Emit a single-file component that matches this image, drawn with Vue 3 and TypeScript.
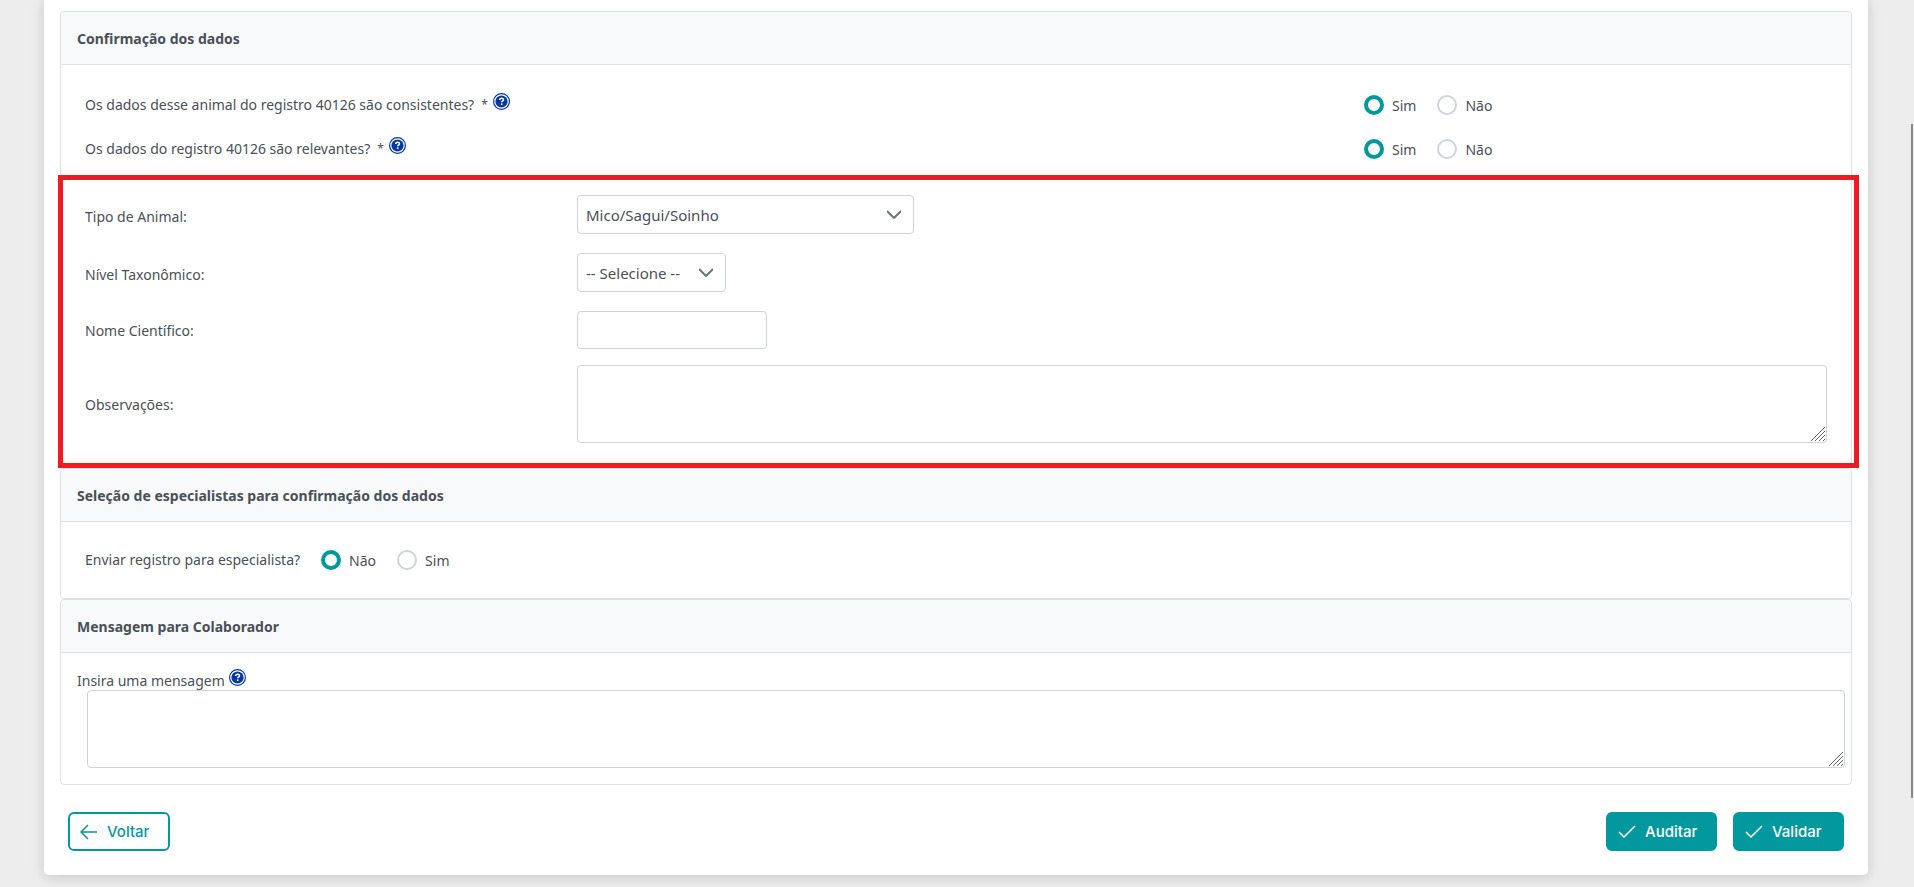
<script setup lang="ts">
import { ref } from 'vue'

interface Question {
  id: string
  text: string
}

const questions: Question[] = [
  { id: 'consistentes', text: 'Os dados desse animal do registro 40126 são consistentes?' },
  { id: 'relevantes', text: 'Os dados do registro 40126 são relevantes?' },
]
const answers = ref<Record<string, string>>({ consistentes: 'Sim', relevantes: 'Sim' })
const animal = ref('Mico/Sagui/Soinho')
const level = ref('')
const scientificName = ref('')
const notes = ref('')
const specialist = ref('Não')
const message = ref('')
</script>

<template>
  <main class="page">
    <form class="card" @submit.prevent>
      <section class="panel">
        <h2 class="panel-title">Confirmação dos dados</h2>
        <div class="questions">
          <div v-for="q in questions" :key="q.id" class="question" role="radiogroup" :aria-labelledby="q.id">
            <div class="question-text">
              <span :id="q.id">{{ q.text }}</span>
              <span class="star">*</span>
              <button type="button" class="help" aria-label="Ajuda">
                <svg viewBox="0 0 17 17" aria-hidden="true">
                  <circle cx="8.5" cy="8.5" r="7.900" fill="#fff" stroke="#06399b" stroke-width="1.200" />
                  <circle cx="8.5" cy="8.5" r="6.100" fill="#06399b" />
                  <path d="M6.700 7.100c0-2.500 3.800-2.300 3.800-.3 0 1.300-1.800 1.300-1.800 2.500" fill="none" stroke="#fff" stroke-width="1.500" />
                  <circle cx="8.700" cy="11.200" r=".9" fill="#fff" />
                </svg>
              </button>
            </div>
            <div class="options">
              <label v-for="o in ['Sim', 'Não']" :key="o" class="option">
                <input v-model="answers[q.id]" type="radio" :name="q.id" :value="o" />
                <span>{{ o }}</span>
              </label>
            </div>
          </div>
        </div>
        <div class="fields">
          <div class="field choice">
            <label for="animal">Tipo de Animal:</label>
            <select id="animal" v-model="animal" class="control wide">
              <option>Mico/Sagui/Soinho</option>
            </select>
          </div>
          <div class="field choice">
            <label for="level">Nível Taxonômico:</label>
            <select id="level" v-model="level" class="control narrow">
              <option value="">-- Selecione --</option>
            </select>
          </div>
          <div class="field">
            <label for="name">Nome Científico:</label>
            <input id="name" v-model="scientificName" type="text" class="control name" />
          </div>
          <div class="field">
            <label for="notes">Observações:</label>
            <div class="area">
              <textarea id="notes" v-model="notes" class="control"></textarea>
              <svg class="grip" viewBox="0 0 14 14" aria-hidden="true">
                <path d="M0 14 14 0M4 14 14 4M8 14l6-6M12 14l2-2" />
              </svg>
            </div>
          </div>
          <div class="highlight"></div>
        </div>
      </section>

      <section class="panel">
        <h2 class="panel-title">Seleção de especialistas para confirmação dos dados</h2>
        <div class="specialist" role="radiogroup" aria-labelledby="specialist">
          <span id="specialist">Enviar registro para especialista?</span>
          <div class="options">
            <label v-for="o in ['Não', 'Sim']" :key="o" class="option">
              <input v-model="specialist" type="radio" name="specialist" :value="o" />
              <span>{{ o }}</span>
            </label>
          </div>
        </div>
      </section>

      <section class="panel">
        <h2 class="panel-title">Mensagem para Colaborador</h2>
        <div class="message">
          <div class="message-label">
            <label for="message">Insira uma mensagem</label>
            <button type="button" class="help" aria-label="Ajuda">
              <svg viewBox="0 0 17 17" aria-hidden="true">
                <circle cx="8.5" cy="8.5" r="7.900" fill="#fff" stroke="#06399b" stroke-width="1.200" />
                <circle cx="8.5" cy="8.5" r="6.100" fill="#06399b" />
                <path d="M6.700 7.100c0-2.500 3.800-2.300 3.800-.3 0 1.300-1.800 1.300-1.800 2.500" fill="none" stroke="#fff" stroke-width="1.500" />
                <circle cx="8.700" cy="11.200" r=".9" fill="#fff" />
              </svg>
            </button>
          </div>
          <div class="area message-area">
            <textarea id="message" v-model="message" class="control"></textarea>
            <svg class="grip" viewBox="0 0 14 14" aria-hidden="true">
              <path d="M0 14 14 0M4 14 14 4M8 14l6-6M12 14l2-2" />
            </svg>
          </div>
        </div>
      </section>

      <footer class="actions">
        <button type="button" class="btn outline">
          <svg viewBox="0 0 18 16" aria-hidden="true"><path d="M17 8H2M8 1 1 8l7 7" /></svg>
          Voltar
        </button>
        <div class="actions-end">
          <button type="button" class="btn">
            <svg viewBox="0 0 18 16" aria-hidden="true"><path d="m1 8 5 5L17 2" /></svg>
            Auditar
          </button>
          <button type="button" class="btn">
            <svg viewBox="0 0 18 16" aria-hidden="true"><path d="m1 8 5 5L17 2" /></svg>
            Validar
          </button>
        </div>
      </footer>
    </form>
    <div class="scroll-thumb"></div>
  </main>
</template>

<style>
body {
  background: #ededed;
}
</style>

<style scoped>
.page,
.page * {
  box-sizing: border-box;
}
.page {
  padding: 0 46px 12px 44px;
  color: #495057;
  font: 14px/20px "Noto Sans", "Open Sans", sans-serif;
}
.card {
  padding: 11px 16px 24px;
  background: #fff;
  border-radius: 0 0 5px 5px;
  box-shadow: 0 2px 14px rgba(0, 0, 0, 0.16);
}
.panel {
  border: 1px solid #dee2e6;
  border-radius: 4px;
}
.panel-title {
  margin: 0;
  padding: 17px 16px 15px;
  border-bottom: 1px solid #dee2e6;
  border-radius: 3px 3px 0 0;
  background: #f8f9fa;
  font-size: 14px;
  font-weight: 700;
  line-height: 20px;
}
.questions {
  padding: 18px 24px 4px;
}
.question {
  display: grid;
  grid-template-columns: 1279fr 463fr;
  align-items: center;
  height: 44px;
}
.question-text {
  display: flex;
  align-items: center;
}
.star {
  margin: 0 5px 0 7px;
  font-size: 12px;
}
.help {
  width: 17px;
  height: 17px;
  margin-bottom: 7px;
  padding: 0;
  border: 0;
  background: none;
}
.help svg {
  display: block;
  width: 17px;
  height: 17px;
}
.options {
  display: flex;
  gap: 21px;
}
.option {
  display: flex;
  align-items: center;
  gap: 8px;
}
.option span {
  padding-top: 2px;
}
.option input {
  appearance: none;
  width: 20px;
  height: 20px;
  margin: 0;
  border: 2px solid #ced4da;
  border-radius: 50%;
  background: #fff;
}
.option input:checked {
  border: 4px solid #03989e;
}
.fields {
  position: relative;
  display: grid;
  gap: 16px;
  padding: 20px 24px 24px;
}
.highlight {
  position: absolute;
  inset: 0 -8px -1px -3px;
  border: 5px solid #ed1c24;
  pointer-events: none;
}
.field {
  display: grid;
  grid-template-columns: 492fr 1250fr;
  align-items: center;
}
.field label {
  padding-top: 2px;
}
.choice {
  margin-bottom: 3px;
}
.choice label {
  padding-top: 4px;
}
.control {
  display: block;
  padding: 0 8px;
  border: 1px solid #ced4da;
  border-radius: 4px;
  background: #fff;
  color: #495057;
  font: inherit;
  font-size: 15px;
}
select.control {
  appearance: none;
  height: 39px;
  background: #fff url("data:image/svg+xml,%3Csvg xmlns='http://www.w3.org/2000/svg' width='14' height='9' fill='none' stroke='%236c757d' stroke-width='2'%3E%3Cpath d='m0 1 7 7 7-7'/%3E%3C/svg%3E") no-repeat right 12px top 14px;
}
.wide {
  width: 337px;
}
.narrow {
  width: 149px;
}
.name {
  width: 190px;
  height: 38px;
}
.area {
  position: relative;
}
.area textarea {
  width: 100%;
  height: 78px;
  resize: none;
}
.grip {
  position: absolute;
  right: 2px;
  bottom: 2px;
  width: 14px;
  height: 14px;
  fill: none;
  stroke: #666;
}
.specialist {
  display: flex;
  align-items: center;
  gap: 21px;
  height: 76px;
  padding: 0 24px;
}
.message {
  padding: 14px 6px 16px 16px;
}
.message-label {
  display: flex;
  align-items: flex-end;
  gap: 4px;
  height: 23px;
  line-height: 18px;
}
.message-label .help {
  margin-bottom: 4px;
}
.message-area {
  margin-left: 10px;
}
.actions {
  display: flex;
  justify-content: space-between;
  padding: 27px 8px 0;
}
.actions-end {
  display: flex;
  gap: 16px;
}
.btn {
  display: flex;
  align-items: center;
  gap: 9px;
  min-width: 111px;
  height: 39px;
  padding: 0 10px;
  border: 2px solid #03989e;
  border-radius: 6px;
  background: #03989e;
  color: #fff;
  font: 500 15px/20px Inter, sans-serif;
}
.btn svg {
  width: 18px;
  height: 16px;
  fill: none;
  stroke: currentColor;
  stroke-width: 1.5;
}
.outline {
  min-width: 102px;
  background: #fff;
  color: #03989e;
}
.scroll-thumb {
  position: fixed;
  top: 14%;
  right: 1px;
  width: 2px;
  height: 76%;
  background: #888;
}
</style>
